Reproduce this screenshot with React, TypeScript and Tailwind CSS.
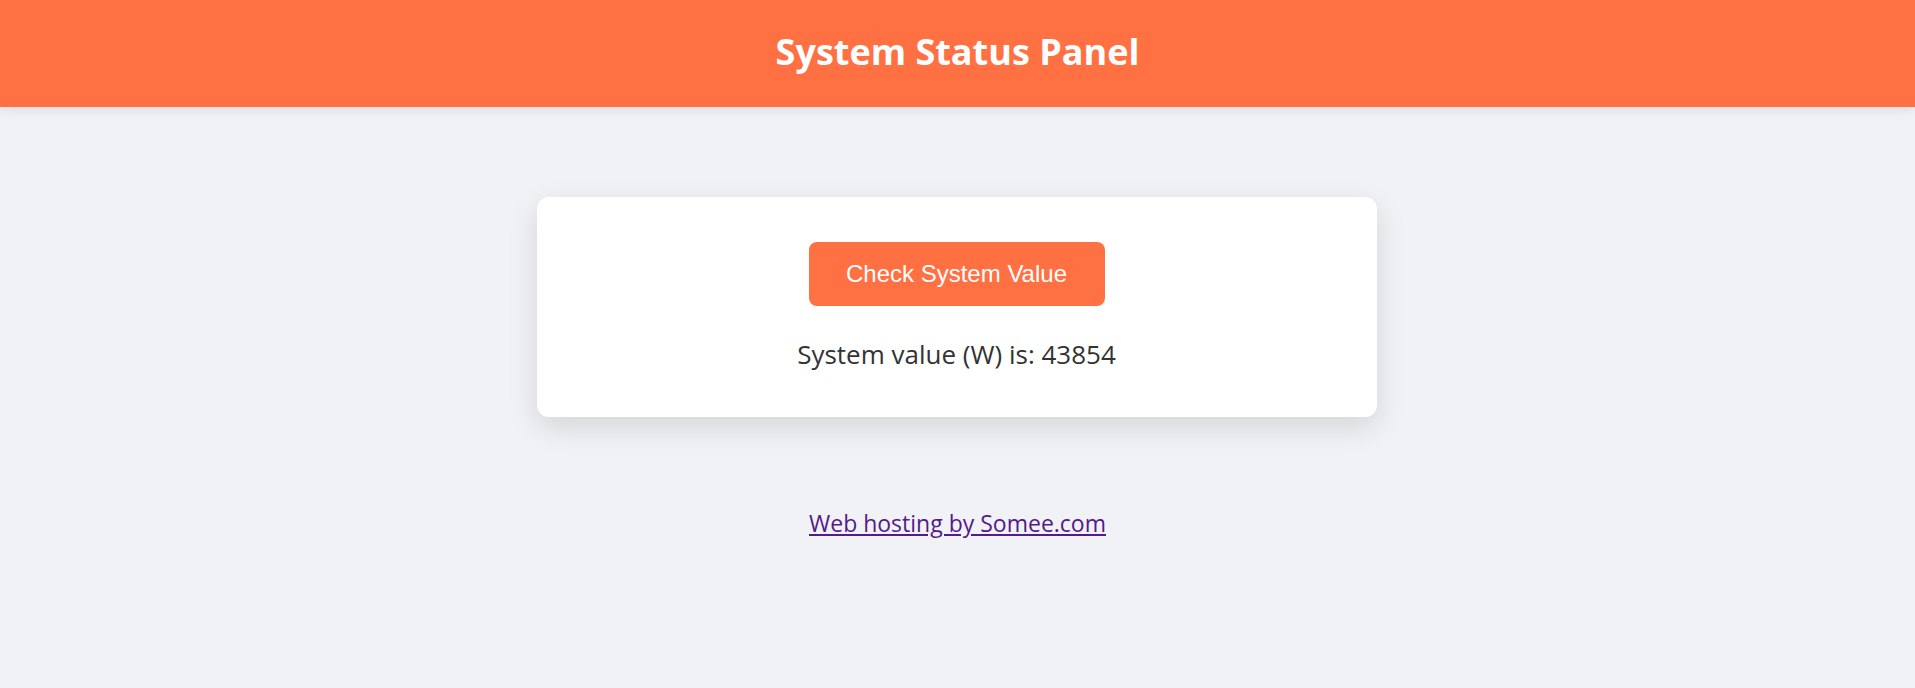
export default function App() {
  return (
    <div className="min-h-[688px] bg-[#f0f2f5] font-['Segoe_UI','Open_Sans',sans-serif] text-[#333]">
      {/* Header */}
      <header className="h-[107px] bg-[#ff7043] flex items-center justify-center shadow-[0_2px_12px_rgba(0,0,0,0.1)] pb-1">
        <h1 className="text-[36px] leading-[1.2] font-bold text-white">System Status Panel</h1>
      </header>

      <main className="flex flex-col items-center">
        <div className="mt-[90px] mr-[2px] w-[840px] bg-white rounded-xl shadow-[0_10px_30px_rgba(0,0,0,0.12)] flex flex-col items-center pt-[45px] pb-[47px]">
          <button className="h-[64px] w-[296px] rounded-lg bg-[#ff7043] text-white text-[24px] font-['Liberation_Sans',Arial,sans-serif]">
            Check System Value
          </button>
          <p className="mt-[33px] text-[26px] leading-[1.2]">System value (W) is: 43854</p>
        </div>

        <a href="#" className="mt-[92px] text-[23px] leading-[1.25] text-[#551a8b] underline">
          Web hosting by Somee.com
        </a>
      </main>
    </div>
  );
}
